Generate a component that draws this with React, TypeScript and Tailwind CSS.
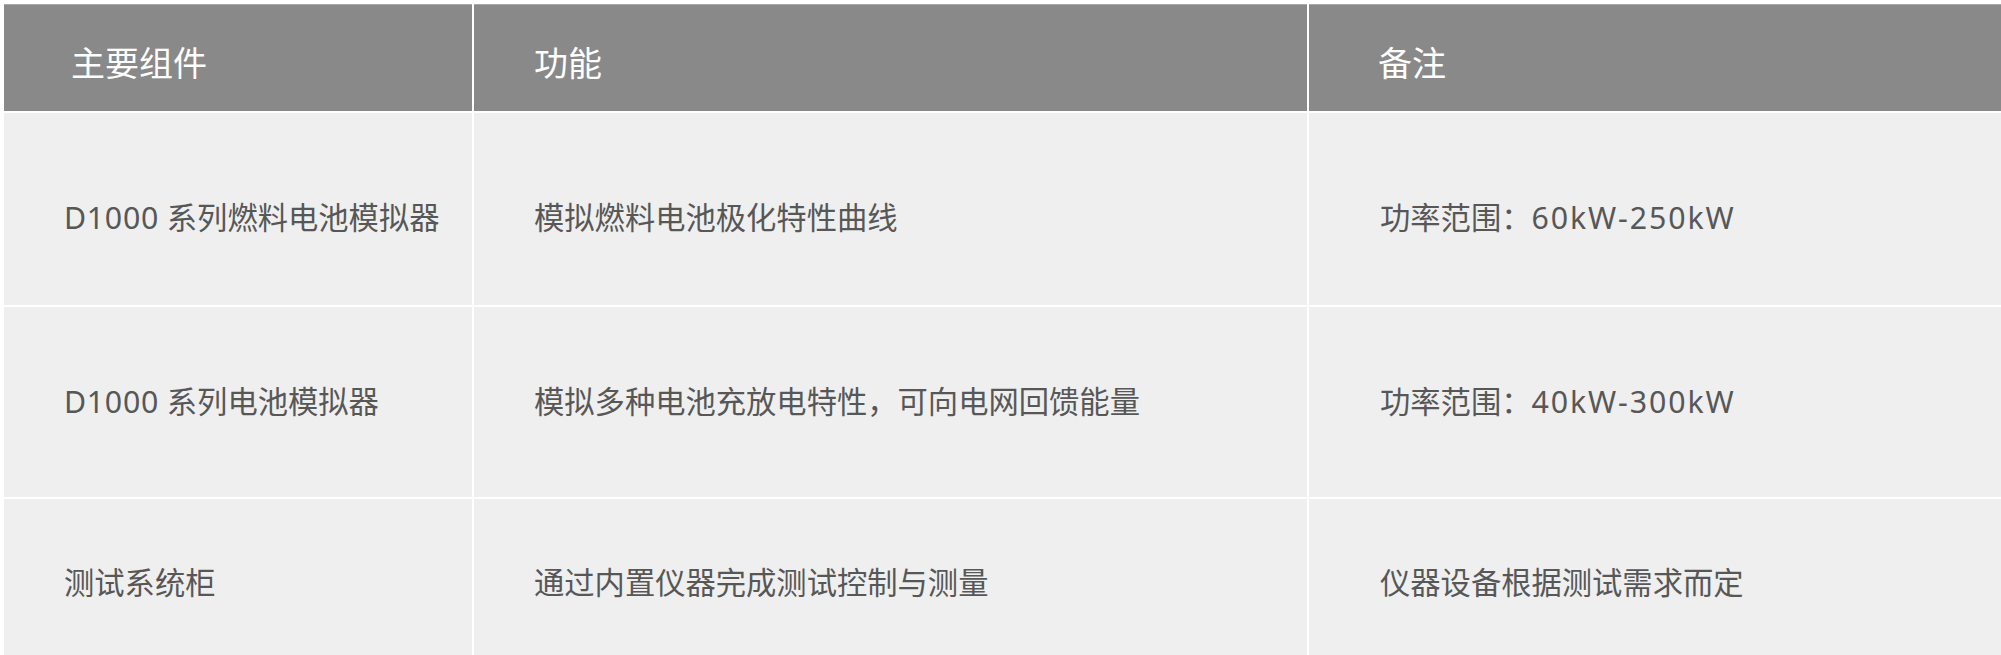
import React from "react";

const rows = [
  {
    a: "D1000 系列燃料电池模拟器",
    b: "模拟燃料电池极化特性曲线",
    c: "功率范围：60kW-250kW",
    h: "h-[192px]",
    pt: "pt-[82px]",
  },
  {
    a: "D1000 系列电池模拟器",
    b: "模拟多种电池充放电特性，可向电网回馈能量",
    c: "功率范围：40kW-300kW",
    h: "h-[190px]",
    pt: "pt-[72px]",
  },
  {
    a: "测试系统柜",
    b: "通过内置仪器完成测试控制与测量",
    c: "仪器设备根据测试需求而定",
    h: "h-[190px]",
    pt: "pt-[61px]",
  },
];

function Txt({ s }: { s: string }) {
  const parts = s.split(/([A-Za-z0-9\-]+)/);
  return (
    <>
      {parts.map((p, i) =>
        /^[A-Za-z0-9\-]+$/.test(p) ? (
          <span key={i} className={/^D\d+$/.test(p) ? "tracking-[0.7px]" : "tracking-[1.9px]"}>
            {p}
          </span>
        ) : (
          <React.Fragment key={i}>{p}</React.Fragment>
        )
      )}
    </>
  );
}

export default function App() {
  return (
    <div
      className="w-[2001px] h-[655px] overflow-hidden bg-white pl-[4px] pt-[4px]"
      style={{ fontFamily: '"Noto Sans", "Noto Sans CJK SC", sans-serif' }}
    >
      <div className="grid grid-cols-[468px_833px_1fr] gap-[2px] bg-white">
        <div className="h-[107px] bg-[#898989] border-t border-[#a9a9a9] pl-[67px] pt-[33px] text-[34px] leading-[1.5] text-white">
          主要组件
        </div>
        <div className="h-[107px] bg-[#898989] border-t border-[#a9a9a9] pl-[60px] pt-[33px] text-[34px] leading-[1.5] text-white">
          功能
        </div>
        <div className="h-[107px] bg-[#898989] border-t border-[#a9a9a9] pl-[69px] pt-[33px] text-[34px] leading-[1.5] text-white">
          备注
        </div>
        {rows.map((r, i) => (
          <React.Fragment key={i}>
            <div className={`${r.h} ${r.pt} bg-[#efefef] pl-[60px] text-[30.3px] leading-[45px] text-[#575757] whitespace-nowrap`}>
              <Txt s={r.a} />
            </div>
            <div className={`${r.h} ${r.pt} bg-[#efefef] pl-[60px] text-[30.3px] leading-[45px] text-[#575757] whitespace-nowrap`}>
              <Txt s={r.b} />
            </div>
            <div className={`${r.h} ${r.pt} bg-[#efefef] pl-[71px] text-[30.3px] leading-[45px] text-[#575757] whitespace-nowrap`}>
              <Txt s={r.c} />
            </div>
          </React.Fragment>
        ))}
      </div>
    </div>
  );
}
